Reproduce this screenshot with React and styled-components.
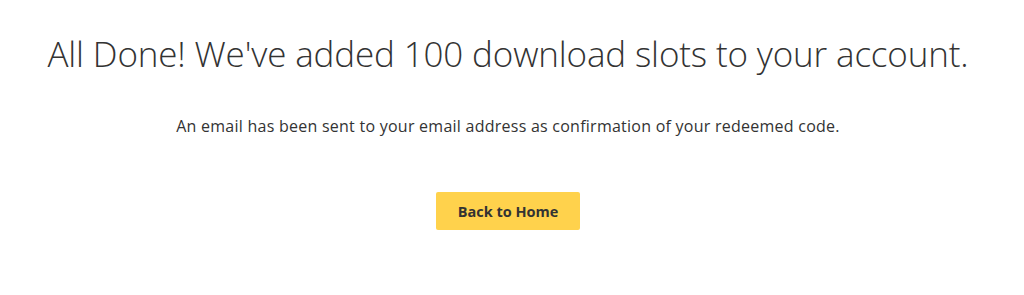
import React from 'react';
import styled, { createGlobalStyle } from 'styled-components';

const GlobalStyle = createGlobalStyle`
    body {
        margin: 0;
        background: #fff;
        font-family: "Open Sans", "Noto Sans", sans-serif;
        color: #333;
    }
`;

const Page = styled.div`
    display: flex;
    flex-direction: column;
    align-items: center;
    padding: 30px 8px 0 0;
`;

const Title = styled.h1`
    margin: 0;
    font-size: 35px;
    font-weight: 300;
    line-height: 48px;
    color: #333;
    letter-spacing: -0.15px;
    white-space: nowrap;
`;

const Message = styled.p`
    margin: 37px 0 0;
    font-size: 16px;
    line-height: 22px;
    letter-spacing: 0.25px;
    color: #333;
    white-space: nowrap;
`;

const HomeButton = styled.button`
    margin-top: 55px;
    width: 144px;
    height: 38px;
    border: none;
    border-radius: 2px;
    background: #ffd24c;
    color: #333;
    font-family: "Open Sans", sans-serif;
    font-size: 14.5px;
    font-weight: 700;
    cursor: pointer;
`;

export default function App() {
    return (
        <>
            <GlobalStyle />
            <Page>
                <Title>All Done! We've added 100 download slots to your account.</Title>
                <Message>An email has been sent to your email address as confirmation of your redeemed code.</Message>
                <HomeButton>Back to Home</HomeButton>
            </Page>
        </>
    );
}
